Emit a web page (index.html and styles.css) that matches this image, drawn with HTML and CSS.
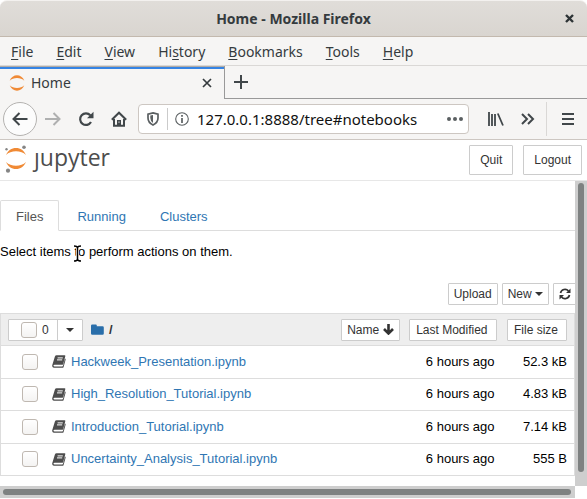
FILE: index.html
```html
<!DOCTYPE html>
<html lang="en">
<head>
<meta charset="utf-8">
<title>Home - Mozilla Firefox</title>
<link rel="stylesheet" href="styles.css">
</head>
<body>
<svg class="defs" aria-hidden="true">
  <symbol id="notebook" viewBox="0 0 14 13">
    <path d="M4.600.3h8q1 0 .7.9l-2.100 7.700q-.3.9-1.200.9H2.600q-1.200 0-1.100.900 0 .7 1.100.7h7.600q.6 0 .8-.6l2-7.200q.9.300.6 1.200l-2 7.100q-.3.900-1.200.900H2.300Q.7 12.800.3 11.500q-.2-.8 0-1.600L2.900 1.500Q3.300.3 4.600.3z" fill="#4d4d4d"/>
    <path d="M5.600 2.900h5.200M5 4.900h5.200" stroke="#fff" stroke-width="1"/>
  </symbol>
  <symbol id="close" viewBox="0 0 10 10"><path d="M1 1l8 8M9 1l-8 8" fill="none" stroke="currentColor" stroke-width="1.700"/></symbol>
</svg>
<div class="window">
  <header class="titlebar">
    <h1>Home - Mozilla Firefox</h1>
    <button class="close" aria-label="Close window"><svg width="9" height="9" viewBox="0 0 9 9"><path d="M1 1l7 7M8 1l-7 7" stroke="#2e3436" stroke-width="2.400"/></svg></button>
  </header>
  <nav class="menubar">
    <button><u>F</u>ile</button><button><u>E</u>dit</button><button><u>V</u>iew</button><button>Hi<u>s</u>tory</button><button><u>B</u>ookmarks</button><button><u>T</u>ools</button><button><u>H</u>elp</button>
  </nav>
  <div class="tabstrip">
    <div class="tab">
      <svg width="16" height="16" viewBox="0 0 16 16" fill="#f08a35"><path d="M.7 5.700C2 2.300 5 .3 8 .3s6 2 7.300 5.400C13.500 3.900 11 3 8 3S2.500 3.900.7 5.700zM.7 10.300C2 13.700 5 15.700 8 15.700s6-2 7.300-5.400C13.500 12.100 11 13 8 13s-5.500-.9-7.300-2.700z"/></svg>
      <span>Home</span>
      <button aria-label="Close tab"><svg width="10" height="10"><use href="#close"/></svg></button>
    </div>
    <div class="tabspace"><button aria-label="New tab"><svg width="14" height="14"><path d="M7 0v14M0 7h14" stroke="#41474a" stroke-width="2"/></svg></button></div>
  </div>
  <div class="toolbar">
    <button class="back" aria-label="Back"><svg width="16" height="14" fill="none" stroke="#41474a" stroke-width="2"><path d="M1.500 7H15.500M7.500 1l-6 6 6 6"/></svg></button>
    <button aria-label="Forward"><svg width="16" height="14" fill="none" stroke="#afb0b0" stroke-width="2"><path d="M0 7h14.500M8.500 1l6 6-6 6"/></svg></button>
    <button aria-label="Reload"><svg width="16" height="16" fill="none" stroke="#41474a" stroke-width="2.200"><path d="M12.300 4.300A5.800 5.800 0 1 0 13 11"/><path d="M15.500.8v6.400H9z" fill="#41474a" stroke="none"/></svg></button>
    <button aria-label="Home page"><svg width="16" height="16"><path d="M.8 8.700L8 1.700l7.200 7" fill="none" stroke="#41474a" stroke-width="2"/><path d="M3 8v6.700h10V8" fill="none" stroke="#41474a" stroke-width="2"/><path d="M6 15V9h4v6z" fill="#41474a"/><path d="M7.500 10.500h1v1.300h-1z" fill="#f6f5f4"/></svg></button>
    <div class="urlbar">
      <svg width="12" height="14" viewBox="0 0 12 14"><path d="M6 .9l5 1.200v4q0 4.600-5 7Q1 10.700 1 6.100v-4z" fill="none" stroke="#5a5f61" stroke-width="1.700"/><path d="M6 3v7.900Q3.300 9.100 3.300 6V3.600z" fill="#5a5f61"/></svg>
      <span class="rule"></span>
      <svg width="14" height="14"><circle cx="7" cy="7" r="6.300" fill="none" stroke="#5a5f61" stroke-width="1.100"/><path d="M7 3v1.700M7 6v5" stroke="#5a5f61" stroke-width="1.700"/></svg>
      <input aria-label="Address" value="127.0.0.1:8888/tree#notebooks">
      <button aria-label="Page actions"><svg width="16" height="4" fill="#5a5f61"><circle cx="2" cy="2" r="2"/><circle cx="8" cy="2" r="2"/><circle cx="14" cy="2" r="2"/></svg></button>
    </div>
    <button aria-label="Library"><svg width="16" height="14" fill="none" stroke="#41474a" stroke-width="1.800"><path d="M1 0v14M4 2v12M7 2v12M9.800 1.500L15 13.500"/></svg></button>
    <button aria-label="More tools"><svg width="14" height="12" fill="none" stroke="#41474a" stroke-width="2"><path d="M1 1l5 5-5 5M7 1l5 5-5 5"/></svg></button>
    <span class="divider"></span>
    <button aria-label="Menu"><svg width="12" height="12" stroke="#41474a" stroke-width="2"><path d="M0 1h12M0 6h12M0 11h12"/></svg></button>
  </div>
  <div class="site">
    <a class="logo" href="#" aria-label="jupyter">
      <svg width="24" height="28" viewBox="0 0 24 28"><path d="M2 10C4 5.500 7.500 3 12 3s8 2.500 10 7c-2.500-2.500-6-3.700-10-3.700S4.500 7.500 2 10zM2 17c2 4.500 5.500 7 10 7s8-2.500 10-7c-2.500 2.500-6 3.700-10 3.700S4.500 19.500 2 17z" fill="#f08a35"/><g fill="#858585"><circle cx="20" cy="2.200" r="1.800"/><circle cx="2.500" cy="4.200" r="1.200"/><circle cx="4" cy="25.700" r="2.100"/></g></svg>
      <span>ȷupyter</span>
    </a>
    <div class="session"><button class="btn large">Quit</button><button class="btn large">Logout</button></div>
  </div>
  <div class="viewport">
    <main>
      <nav class="views"><a class="active" href="#files">Files</a><a href="#running">Running</a><a href="#clusters">Clusters</a></nav>
      <p class="hint">Select items <span class="pointed">to<svg class="ibeam" width="9" height="19"><path d="M1 2q3 0 3.500 1.500Q5 2 8 2M4.500 3v13M1 17q3 0 3.500-1.500Q5 17 8 17" fill="none" stroke="#fff" stroke-width="3"/><path d="M1 2q3 0 3.500 1.500Q5 2 8 2M4.500 3v13M1 17q3 0 3.500-1.500Q5 17 8 17" fill="none" stroke="#000" stroke-width="1.500"/></svg></span> perform actions on them.</p>
      <div class="actions">
        <button class="btn">Upload</button>
        <button class="btn">New <i class="caret"></i></button>
        <button class="btn refresh" aria-label="Refresh"><svg width="12" height="12" viewBox="0 0 12 12"><path d="M1.500 5A4.600 4.600 0 0 1 9.500 3M10.500 7A4.600 4.600 0 0 1 2.500 9" fill="none" stroke="#333" stroke-width="1.700"/><path d="M11.500.5V5H7zM.5 11.500V7H5z" fill="#333"/></svg></button>
      </div>
      <table>
        <thead>
          <tr>
            <th><div class="heading">
              <div class="select btn"><label><input type="checkbox"><span>0</span></label><button aria-label="Select by type"><i class="caret"></i></button></div>
              <a class="crumb" href="#" aria-label="Root folder"><svg width="13" height="12"><path d="M1.200.5h3.600q1 0 1 1v.7h5.800q1.200 0 1.200 1.200v6.200q0 1.200-1.200 1.200H1.200Q0 10.800 0 9.600V1.700Q0 .5 1.200.5z" fill="#296eaa"/></svg></a>
              <span class="root">/</span>
              <button class="btn name">Name <svg width="11" height="11"><path d="M5.500 0v9M1 5l4.500 4.500L10 5" fill="none" stroke="#333" stroke-width="2.600"/></svg></button>
            </div></th>
            <th class="modified"><button class="btn sort">Last Modified</button></th>
            <th class="size"><button class="btn sort">File size</button></th>
          </tr>
        </thead>
        <tbody>
          <tr><td><div class="item"><input type="checkbox" aria-label="Select Hackweek_Presentation.ipynb"><svg width="14" height="13"><use href="#notebook"/></svg><a href="#">Hackweek_Presentation.ipynb</a></div></td><td class="modified">6 hours ago</td><td class="size">52.3 kB</td></tr>
          <tr><td><div class="item"><input type="checkbox" aria-label="Select High_Resolution_Tutorial.ipynb"><svg width="14" height="13"><use href="#notebook"/></svg><a href="#">High_Resolution_Tutorial.ipynb</a></div></td><td class="modified">6 hours ago</td><td class="size">4.83 kB</td></tr>
          <tr><td><div class="item"><input type="checkbox" aria-label="Select Introduction_Tutorial.ipynb"><svg width="14" height="13"><use href="#notebook"/></svg><a href="#">Introduction_Tutorial.ipynb</a></div></td><td class="modified">6 hours ago</td><td class="size">7.14 kB</td></tr>
          <tr><td><div class="item"><input type="checkbox" aria-label="Select Uncertainty_Analysis_Tutorial.ipynb"><svg width="14" height="13"><use href="#notebook"/></svg><a href="#">Uncertainty_Analysis_Tutorial.ipynb</a></div></td><td class="modified">6 hours ago</td><td class="size">555 B</td></tr>
        </tbody>
      </table>
    </main>
    <div class="track vertical"><div class="thumb"></div></div>
    <div class="track horizontal"><div class="thumb"></div></div>
  </div>
</div>
</body>
</html>
```
FILE: styles.css
```css
* { box-sizing: border-box; }
body { margin: 0; background: #fff; font: 13px/20px "Liberation Sans", Arial, sans-serif; color: #000; }
button { margin: 0; padding: 0; border: 0; background: none; color: inherit; font: inherit; }
svg { display: block; flex: none; }
a { color: #2f76b3; text-decoration: none; }
.defs { position: absolute; width: 0; height: 0; }
.window { display: flex; flex-direction: column; height: 100vh; padding-bottom: 1px; overflow: hidden; }
.titlebar, .menubar, .tabstrip, .toolbar { flex: none; font-family: "Noto Sans", "Open Sans", sans-serif; color: #353b3e; background: #f6f5f4; }

.titlebar { display: grid; grid-template-columns: 36px 1fr 36px; align-items: center; height: 37px; border-top: 1px solid #f3f1ef; border-bottom: 1px solid #c3b9ae; border-radius: 7px 7px 0 0; background: linear-gradient(#e0ddd9, #d9d5d0); }
.titlebar h1 { grid-column: 2; margin: 0; font-size: 14px; font-weight: 700; text-align: center; }
.titlebar .close { display: grid; place-items: center; }

.menubar { display: flex; gap: 23px; height: 29px; padding: 2px 0 0 11px; border-bottom: 1px solid #dad8d6; font-size: 14px; }
.menubar u { text-underline-offset: 2px; }

.tabstrip { display: flex; height: 33px; }
.tab { display: flex; align-items: center; width: 225px; padding: 0 12px 0 9px; border-right: 1px solid #999; box-shadow: inset 0 1px #b1aca7, inset 0 3px #3584e4; font-size: 14px; }
.tab span { flex: 1; padding-left: 6px; }
.tabspace { display: flex; align-items: center; flex: 1; padding-left: 9px; border-bottom: 1px solid #999; }

.toolbar { display: flex; align-items: center; height: 41px; padding: 0 13px 0 3px; border-bottom: 1px solid #cdc7c2; }
.toolbar > button { margin-right: 17px; }
.toolbar > .back { display: grid; place-items: center; width: 34px; height: 34px; margin-right: 8px; border: 1px solid #b4b2b0; border-radius: 50%; background: #fcfcfc; }
.toolbar > button:last-child { margin-right: 0; }
.urlbar { display: flex; align-items: center; flex: 1; min-width: 0; height: 30px; margin: 0 19px 0 -6px; padding: 0 5px 0 8px; border: 1px solid #cdc7c2; border-radius: 4px; background: #fff; }
.urlbar .rule { width: 1px; height: 22px; margin: 0 7px 0 8px; background: #cbcbcb; }
.urlbar input { flex: 1; min-width: 0; padding: 0; margin-left: 8px; border: 0; outline: 0; background: none; color: #111; font: 15px/24px "Noto Sans", "Open Sans", sans-serif; }
.divider { width: 1px; height: 34px; margin-right: 15px; margin-left: -6px; background: #dad8d6; }

.site { display: flex; flex: none; justify-content: space-between; height: 41px; padding: 5px 5px 0 4px; border-bottom: 1px solid #e7e7e7; }
.logo { display: flex; align-items: flex-start; gap: 6px; color: #4d4d4d; font: 23px/24px "Open Sans", "Noto Sans", sans-serif; }
.session { display: flex; gap: 10px; }
.btn { display: flex; align-items: center; height: 22px; padding: 0 5px; border: 1px solid #ccc; border-radius: 1px; background: #fff; color: #333; font-size: 12px; font-weight: 400; line-height: 18px; white-space: pre; }
.btn.large { height: 30px; padding: 0 10px; }
.btn.sort { padding: 0 8px 0 6px; }
.caret { border: 4px solid transparent; border-top-color: #333; border-bottom: 0; }

.viewport { display: grid; flex: 1; grid-template: 1fr 12px / 1fr 12px; min-height: 0; }
main { min-width: 0; overflow: hidden; }
.views { display: flex; gap: 2px; padding-top: 19px; border-bottom: 1px solid #ddd; }
.views a { height: 30px; padding: 6px 15px 0; border: 1px solid transparent; }
.views .active { height: 31px; margin-bottom: -1px; border-color: #ddd #ddd #fff; border-radius: 2px 2px 0 0; color: #555; background: #fff; }
.hint { margin: 11px 0 21px; }
.pointed { position: relative; }
.ibeam { position: absolute; left: -1px; top: 0; }
.actions { display: flex; justify-content: flex-end; gap: 4px; margin-right: -2px; }

table { width: 100%; height: 163px; margin-top: 8px; border-collapse: collapse; border: 1px solid #ddd; }
tr { border-top: 1px solid #ddd; }
thead { background: #eee; }
thead tr { height: 32px; }
th, td { padding: 0; text-align: right; font-weight: 400; }
th .btn { margin-left: auto; }
.modified { width: 97px; }
.size { width: 78px; padding-right: 7px; }
td.modified { padding-right: 2px; }
.heading, .item { display: flex; align-items: center; padding-left: 7px; }
.item { padding-left: 21px; }
.item svg { margin: 0 5px 0 14px; }
.heading .select { width: 75px; margin: 0 8px 0 0; padding: 0; }
.select label { display: flex; align-items: center; gap: 5px; width: 48px; padding-left: 12px; }
.select button { display: grid; place-items: center; flex: 1; height: 20px; border-left: 1px solid #ccc; }
.root { margin-left: 5px; color: #333; font-weight: 700; }
input[type="checkbox"] { appearance: none; flex: none; width: 16px; height: 16px; margin: 0; border: 1px solid #bfb8b1; border-radius: 3px; background: linear-gradient(#fff, #f4f3f2); }

.track { background: #cecece; }
.vertical { padding: 2px 3px 14px; }
.horizontal { padding: 3px 4px 3px 3px; }
.thumb { border-radius: 3px; background: #7e8181; }
.vertical .thumb { width: 6px; height: 100%; }
.horizontal .thumb { width: 100%; height: 6px; }
```
